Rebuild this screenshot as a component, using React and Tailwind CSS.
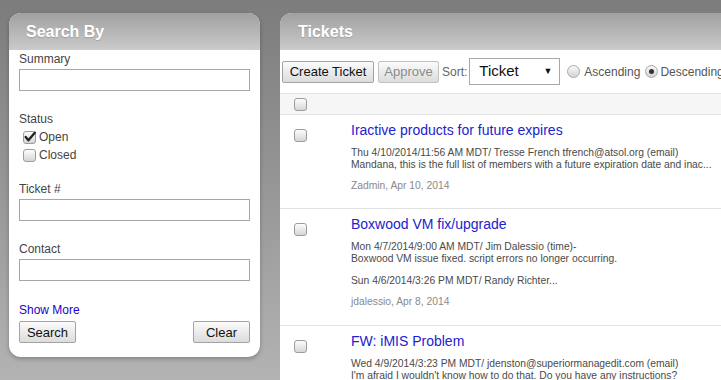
import React from "react";

function Check({ checked = false }) {
  return (
    <span className="relative inline-block w-[13px] h-[13px] shrink-0 rounded-[3px] border border-[#9c9c9c] bg-linear-to-b from-[#fdfdfd] to-[#d6d6d6]">
      {checked && (
        <svg viewBox="0 0 13 13" className="absolute left-[-1px] top-[-2px] w-[14px] h-[14px]">
          <path d="M2.5 6.5 L5 9.5 L11 2.5" fill="none" stroke="#222" strokeWidth="2.2" strokeLinecap="round" strokeLinejoin="round" />
        </svg>
      )}
    </span>
  );
}

function Radio({ checked = false }) {
  return (
    <span className="relative inline-flex items-center justify-center w-[13px] h-[13px] shrink-0 rounded-full border border-[#a8a8a8] bg-linear-to-b from-[#f8f8f8] to-[#d4d4d4]">
      {checked && <span className="w-[5px] h-[5px] rounded-full bg-[#333]" />}
    </span>
  );
}

function Btn({ children, className = "", disabled = false }) {
  return (
    <button
      className={
        "h-[22px] rounded-[2px] border bg-linear-to-b from-[#fbfbfb] to-[#dcdcdc] text-[13px] leading-none " +
        (disabled ? "border-[#c2c2c2] text-[#8a8a8a] " : "border-[#a3a3a3] text-[#111] ") +
        className
      }
    >
      {children}
    </button>
  );
}

function Field({ label, className = "" }) {
  return (
    <div className={className}>
      <div className="text-[12px] leading-[14px] text-[#444]">{label}</div>
      <div className="mt-[3px] h-[22px] border border-[#a6a6a6] bg-white" />
    </div>
  );
}

function Ticket({ title, lines, extra, author, pb = "pb-[16px]" }) {
  return (
    <div className={"flex border-b border-[#e2e2e2] pt-[7px] " + pb}>
      <div className="w-[71px] shrink-0 pl-[14px] pt-[3px]">
        <Check />
      </div>
      <div className="min-w-0 whitespace-nowrap">
        <div className="text-[14px] leading-[16px] text-[#2222cc]">{title}</div>
        <div className="mt-[9px] text-[10.3px] leading-[12px] text-[#4a4a4a]">
          {lines.map((l, i) => (
            <div key={i}>{l}</div>
          ))}
        </div>
        {extra && <div className="mt-[10px] text-[10.3px] leading-[12px] text-[#4a4a4a]">{extra}</div>}
        <div className="mt-[9px] text-[10.3px] leading-[12px] text-[#8a8a8a]">{author}</div>
      </div>
    </div>
  );
}

export default function App() {
  return (
    <div className="w-[721px] h-[380px] overflow-hidden bg-linear-to-b from-[#7c7c7c] to-[#b3b3b3] flex items-start gap-[20px] pt-[13px] pl-[9px] font-['Liberation_Sans',Arial,sans-serif]">
      {/* Left panel */}
      <div className="w-[251px] shrink-0 rounded-[12px] bg-white overflow-hidden shadow-[0_2px_4px_rgba(0,0,0,0.25)]">
        <div className="h-[37px] flex items-center pl-[17px] bg-linear-to-b from-[#a0a0a0] to-[#cbcbcb]">
          <span className="text-[16px] font-bold text-white [text-shadow:0_1px_1px_rgba(0,0,0,0.15)]">Search By</span>
        </div>
        <div className="px-[10px] pt-[2px] pb-[14px]">
          <Field label="Summary" />
          <div className="mt-[21px] text-[12px] leading-[14px] text-[#444]">Status</div>
          <div className="mt-[2px] pl-[4px]">
            <label className="flex items-center h-[18px] gap-[3px] text-[12px] text-[#444]">
              <Check checked />
              <span>Open</span>
            </label>
            <label className="flex items-center h-[18px] gap-[3px] text-[12px] text-[#444]">
              <Check />
              <span>Closed</span>
            </label>
          </div>
          <Field label="Ticket #" className="mt-[18px]" />
          <Field label="Contact" className="mt-[21px]" />
          <div className="mt-[22px] text-[12px] leading-[14px] text-[#2200cc]">Show More</div>
          <div className="mt-[4px] flex justify-between">
            <Btn className="w-[57px]">Search</Btn>
            <Btn className="w-[57px]">Clear</Btn>
          </div>
        </div>
      </div>

      {/* Right panel */}
      <div className="w-[640px] h-[420px] shrink-0 rounded-t-[12px] bg-white overflow-hidden">
        <div className="h-[37px] flex items-center pl-[18px] bg-linear-to-b from-[#a0a0a0] to-[#cbcbcb]">
          <span className="text-[16px] font-bold text-white [text-shadow:0_1px_1px_rgba(0,0,0,0.15)]">Tickets</span>
        </div>
        <div className="h-[43px] flex items-center pl-[2px] whitespace-nowrap">
          <Btn className="w-[92px]">Create Ticket</Btn>
          <Btn disabled className="ml-[4px] w-[61px]">Approve</Btn>
          <span className="ml-[3px] text-[12px] text-[#666]">Sort:</span>
          <div className="ml-[2px] h-[27px] w-[91px] border border-[#a8a8a8] bg-white flex items-center justify-between pl-[9px] pr-[7px]">
            <span className="text-[15px] text-[#111]">Ticket</span>
            <span className="text-[9px] text-[#111]">▼</span>
          </div>
          <span className="ml-[7px] flex items-center gap-[4px] text-[12px] text-[#555]">
            <Radio />
            <span>Ascending</span>
          </span>
          <span className="ml-[5px] flex items-center gap-[2px] text-[12px] text-[#555]">
            <Radio checked />
            <span>Descending</span>
          </span>
        </div>
        <div className="h-[22px] flex items-center pl-[14px] border-t border-b border-[#e4e4e4] bg-[#f6f6f6]">
          <Check />
        </div>
        <Ticket
          title="Iractive products for future expires"
          lines={[
            "Thu 4/10/2014/11:56 AM MDT/ Tresse French tfrench@atsol.org (email)",
            "Mandana, this is the full list of members with a future expiration date and inac...",
          ]}
          author="Zadmin, Apr 10, 2014"
        />
        <Ticket
          title="Boxwood VM fix/upgrade"
          lines={[
            "Mon 4/7/2014/9:00 AM MDT/ Jim Dalessio (time)-",
            "Boxwood VM issue fixed. script errors no longer occurring.",
          ]}
          extra="Sun 4/6/2014/3:26 PM MDT/ Randy Richter..."
          author="jdalessio, Apr 8, 2014"
          pb="pb-[17px]"
        />
        <Ticket
          title="FW: iMIS Problem"
          lines={[
            "Wed 4/9/2014/3:23 PM MDT/ jdenston@superiormanagedit.com (email)",
            "I'm afraid I wouldn't know how to do that. Do you have any instructions?",
          ]}
          author="jdenston, Apr 9, 2014"
        />
      </div>
    </div>
  );
}
